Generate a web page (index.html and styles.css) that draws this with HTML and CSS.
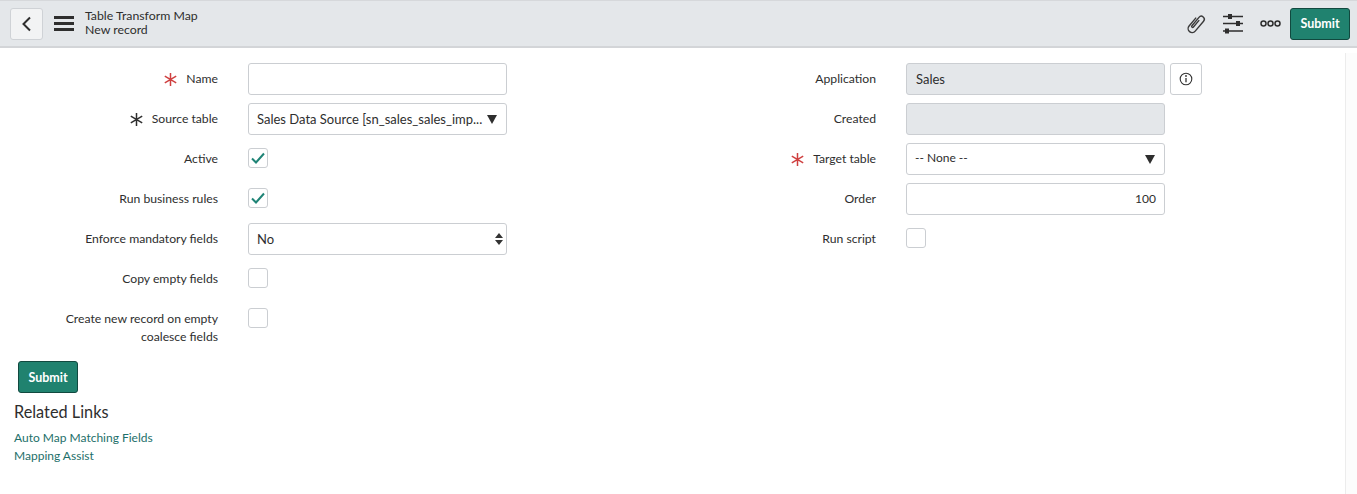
FILE: index.html
```html
<!DOCTYPE html>
<html>
<head>
	<title>Table Transform Map</title>
	<link rel="stylesheet" href="styles.css">
</head>
<body>
<div class="header">
	<div class="btn-back">
		<svg width="12" height="16" viewBox="0 0 12 16"><path d="M9 1.500 2.500 8 9 14.500" fill="none" stroke="#2e2e2e" stroke-width="2"/></svg>
	</div>
	<div class="burger"><span></span><span></span><span></span></div>
	<div class="title">
		<div>Table Transform Map</div>
		<div>New record</div>
	</div>
	<div class="actions">
		<svg class="clip" width="22" height="22" viewBox="0 0 22 22"><path transform="rotate(40 11 11)" d="M7 6v11a4 4 0 0 0 8 0V4a3 3 0 0 0-6 0v11a1 1 0 0 0 2 0V6" fill="none" stroke="#3a3a3a" stroke-width="1.400"/></svg>
		<svg class="sliders" width="20" height="21" viewBox="0 0 20 21"><path d="M0 3.500h20M0 10.500h20M0 18h20" stroke="#2e2e2e" stroke-width="1.300"/><path d="M5 1h4v5H5zM13 8h4v5h-4zM2 15.500h4v5H2z" fill="#2e2e2e"/></svg>
		<svg class="dots" width="21" height="7" viewBox="0 0 21 7"><g fill="none" stroke="#2e2e2e" stroke-width="1.500"><circle cx="3.500" cy="3.500" r="2.500"/><circle cx="10.500" cy="3.500" r="2.500"/><circle cx="17.500" cy="3.500" r="2.500"/></g></svg>
		<button class="submit">Submit</button>
	</div>
</div>
<div class="page">
	<div class="content">
		<div class="form">
			<div class="col">
				<div class="row">
					<label class="lbl"><svg class="star red" width="13" height="13" viewBox="0 0 13 13"><path d="M6.500 0v13M.8 3.200l11.400 6.600M.8 9.800l11.400-6.600"/></svg>Name</label>
					<div class="ctl"><div class="inp"></div></div>
				</div>
				<div class="row">
					<label class="lbl"><svg class="star" width="13" height="13" viewBox="0 0 13 13"><path d="M6.500 0v13M.8 3.200l11.400 6.600M.8 9.800l11.400-6.600"/></svg>Source table</label>
					<div class="ctl">
						<div class="inp sel"><span class="val">Sales Data Source [sn_sales_sales_imp...</span><span class="tri"></span></div>
					</div>
				</div>
				<div class="row">
					<label class="lbl">Active</label>
					<div class="ctl"><div class="chk"><svg width="14" height="12" viewBox="0 0 14 12"><path d="M1 6.500 5 10.500 13 1.500" fill="none" stroke="#1f8476" stroke-width="2"/></svg></div></div>
				</div>
				<div class="row">
					<label class="lbl">Run business rules</label>
					<div class="ctl"><div class="chk"><svg width="14" height="12" viewBox="0 0 14 12"><path d="M1 6.500 5 10.500 13 1.500" fill="none" stroke="#1f8476" stroke-width="2"/></svg></div></div>
				</div>
				<div class="row">
					<label class="lbl">Enforce mandatory fields</label>
					<div class="ctl">
						<div class="inp sel"><span class="val">No</span><svg class="updown" width="8" height="12" viewBox="0 0 8 12"><path d="M4 0 8 5H0zM4 12 0 7h8z" fill="#333"/></svg></div>
					</div>
				</div>
				<div class="row">
					<label class="lbl">Copy empty fields</label>
					<div class="ctl"><div class="chk"></div></div>
				</div>
				<div class="row">
					<label class="lbl">Create new record on empty coalesce fields</label>
					<div class="ctl"><div class="chk"></div></div>
				</div>
			</div>
			<div class="col">
				<div class="row">
					<label class="lbl">Application</label>
					<div class="ctl">
						<div class="inp off">Sales</div>
						<div class="btn-info"><svg width="14" height="14" viewBox="0 0 14 14"><circle cx="7" cy="7" r="5.800" fill="none" stroke="#333" stroke-width="1.100"/><path d="M7 6v4.200" stroke="#333" stroke-width="1.300"/><circle cx="7" cy="4" r=".9" fill="#333"/></svg></div>
					</div>
				</div>
				<div class="row">
					<label class="lbl">Created</label>
					<div class="ctl"><div class="inp off"></div></div>
				</div>
				<div class="row">
					<label class="lbl"><svg class="star red" width="13" height="13" viewBox="0 0 13 13"><path d="M6.500 0v13M.8 3.200l11.400 6.600M.8 9.800l11.400-6.600"/></svg>Target table</label>
					<div class="ctl">
						<div class="inp sel"><span class="val val-none">-- None --</span><span class="tri"></span></div>
					</div>
				</div>
				<div class="row">
					<label class="lbl">Order</label>
					<div class="ctl"><div class="inp num">100</div></div>
				</div>
				<div class="row">
					<label class="lbl">Run script</label>
					<div class="ctl"><div class="chk"></div></div>
				</div>
			</div>
		</div>
		<button class="submit submit-low">Submit</button>
		<div class="related">
			<h3>Related Links</h3>
			<a href="#">Auto Map Matching Fields</a>
			<a href="#">Mapping Assist</a>
		</div>
	</div>
	<div class="track"></div>
</div>
</body>
</html>
```

FILE: styles.css
```css
*{
	box-sizing: border-box;
}
html,body{
	height: 100%;
}
body{
	margin: 0;
	overflow: hidden;
	background-color: #fff;
	color: #2e2e2e;
	font-family: Lato, "Open Sans", sans-serif;
	font-size: 12.200px;
	line-height: 18px;
}
.header{
	display: flex;
	align-items: center;
	height: 48px;
	padding: 0 7px 0 10px;
	background-color: #e4e7ea;
	border-top: 1px solid #d6d8db;
	border-bottom: 2px solid #d3d5d8;
}
.btn-back{
	display: flex;
	align-items: center;
	justify-content: center;
	width: 33px;
	height: 32px;
	background-color: #f2f3f4;
	border: 1px solid #cfd2d6;
	border-radius: 3px;
}
.burger{
	display: flex;
	flex-direction: column;
	gap: 3px;
	width: 20px;
	margin-left: 11px;
}
.burger span{
	height: 3px;
	background-color: #2e2e2e;
}
.title{
	margin: -2px 0 0 11px;
	font-size: 12.300px;
	line-height: 14px;
}
.actions{
	display: flex;
	align-items: center;
	margin-left: auto;
}
.clip{
	margin-right: 16px;
}
.sliders{
	margin-right: 17px;
}
.dots{
	margin-right: 9px;
}
.submit{
	width: 60px;
	height: 32px;
	padding: 0;
	background-color: #20826f;
	border: 1px solid #11493f;
	border-radius: 3px;
	color: #fff;
	font-family: inherit;
	font-size: 12.500px;
	font-weight: 700;
}
.page{
	display: flex;
	height: 446px;
}
.content{
	flex: 1;
}
.track{
	width: 12px;
	margin-top: 5px;
	background-color: #fcfcfc;
	border-left: 1px solid #ececec;
}
.form{
	display: flex;
	padding-top: 15px;
}
.col{
	width: 658px;
}
.row{
	display: flex;
	min-height: 32px;
	margin-bottom: 8px;
}
.lbl{
	width: 218px;
	padding: 7px 0 0 60px;
	text-align: right;
}
.star{
	margin-right: 9px;
	vertical-align: -3px;
	fill: none;
	stroke: #2e2e2e;
	stroke-width: 1.500;
}
.red{
	stroke: #cf4040;
}
.ctl{
	display: flex;
	align-items: flex-start;
	gap: 5px;
	margin-left: 30px;
}
.inp{
	width: 259px;
	height: 32px;
	padding: 6px 8px;
	background-color: #fff;
	border: 1px solid #cbced2;
	border-radius: 3px;
	font-size: 13px;
}
.sel{
	display: flex;
	align-items: center;
	justify-content: space-between;
}
.val{
	white-space: nowrap;
}
.val-none{
	margin-top: -2px;
	font-size: 12px;
}
.tri{
	width: 0;
	height: 0;
	margin-right: 1px;
	border-left: 5.500px solid transparent;
	border-right: 5.500px solid transparent;
	border-top: 9px solid #2e2e2e;
}
.updown{
	margin-right: -5px;
}
.off{
	background-color: #e4e7ea;
	padding-left: 9px;
}
.num{
	font-size: 12px;
	text-align: right;
}
.chk{
	display: flex;
	align-items: center;
	justify-content: center;
	width: 20px;
	height: 20px;
	margin-top: 5px;
	border: 1px solid #cbced2;
	border-radius: 3px;
}
.btn-info{
	display: flex;
	align-items: center;
	justify-content: center;
	width: 32px;
	height: 32px;
	border: 1px solid #cbced2;
	border-radius: 3px;
}
.submit-low{
	display: block;
	margin: 7px 0 0 18px;
}
.related{
	padding-left: 14px;
}
.related h3{
	margin: 8px 0 6px;
	font-size: 16.300px;
	font-weight: 400;
	line-height: 22px;
}
.related a{
	display: block;
	color: #1d6f6a;
	font-size: 12px;
	text-decoration: none;
}
```
